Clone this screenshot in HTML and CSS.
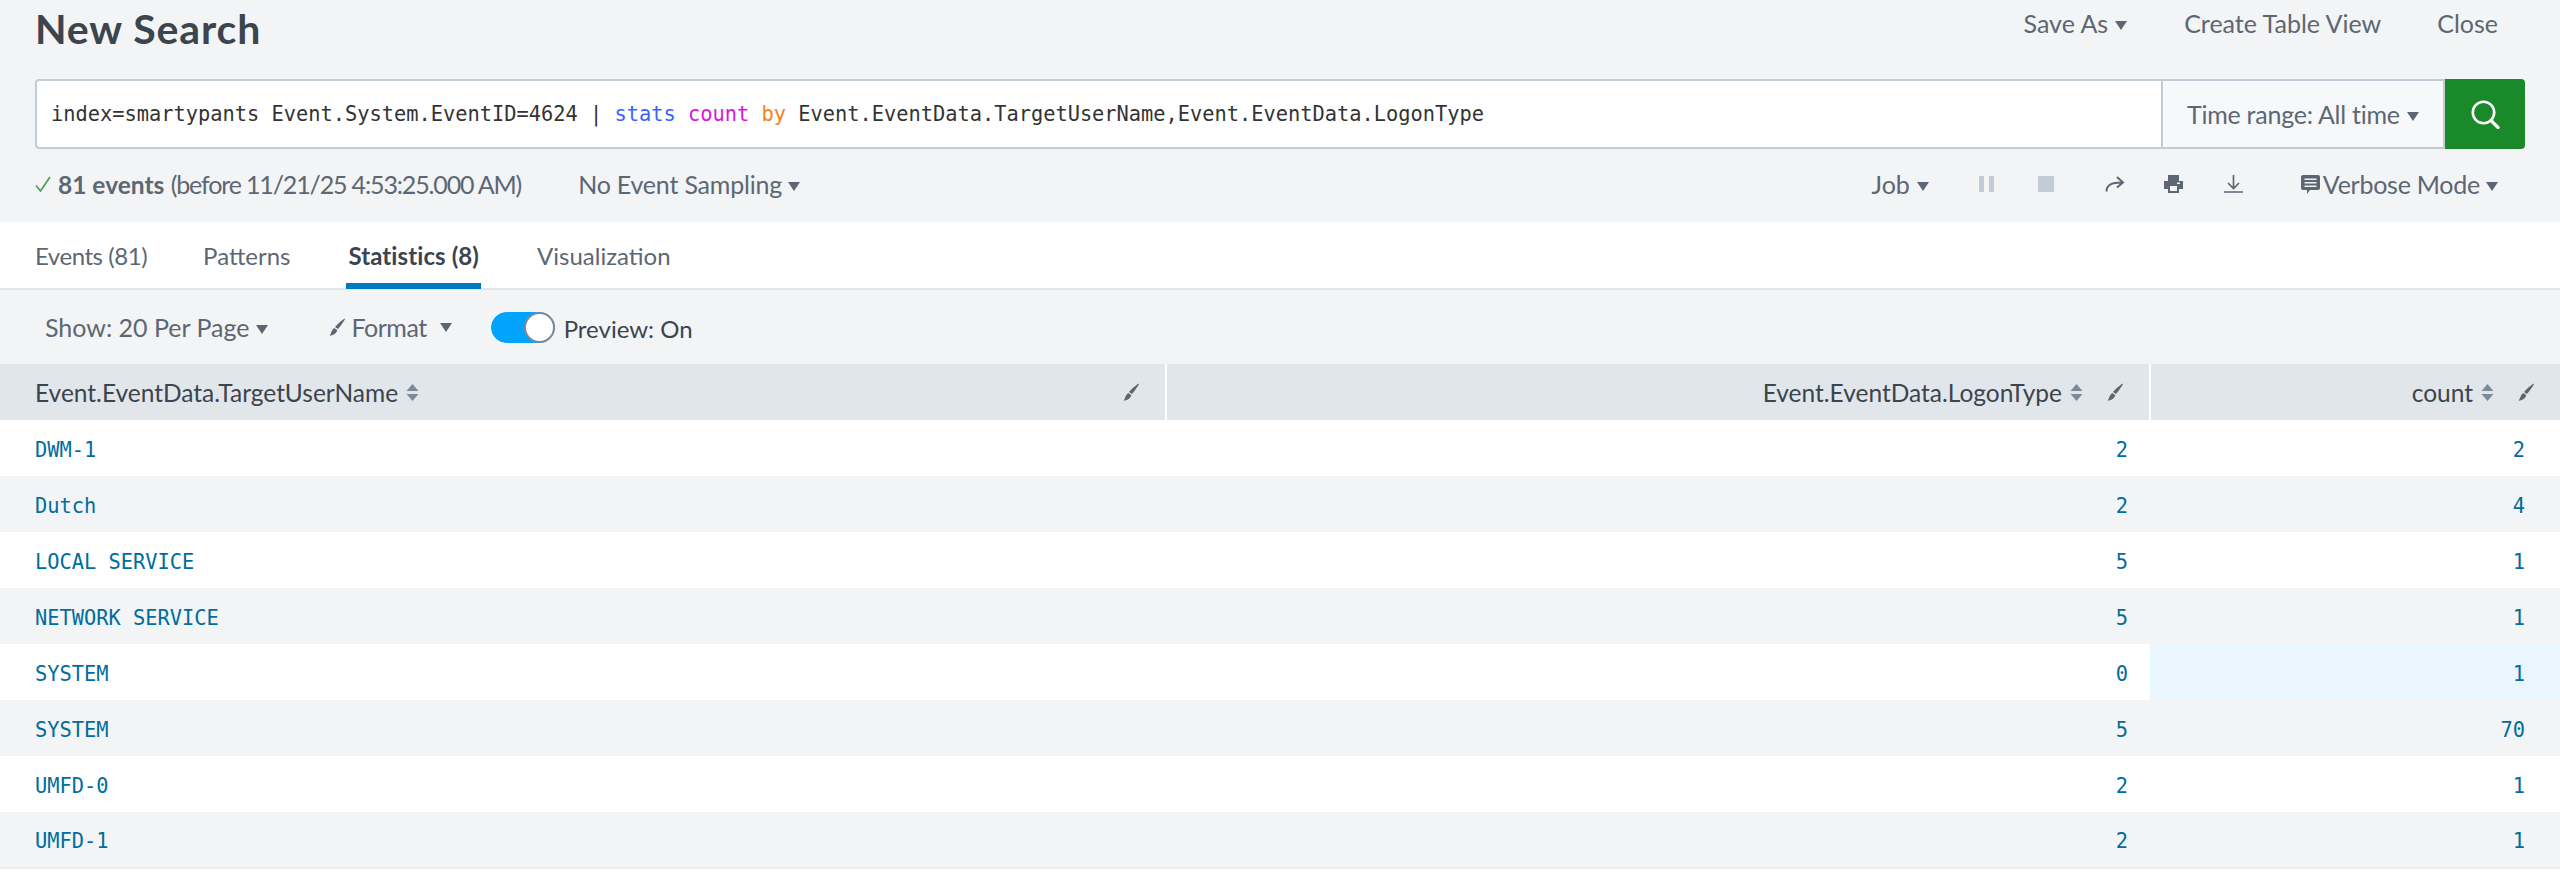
FILE: index.html
```html
<!DOCTYPE html>
<html lang="en">
<head>
<meta charset="utf-8">
<title>New Search</title>
<link rel="stylesheet" href="styles.css">
</head>
<body>
<svg class="defs" width="0" height="0" aria-hidden="true">
  <defs>
    <symbol id="brush" viewBox="0 0 18 18"><path d="M17.500 0.500 L18 1.200 C16 4.500 13.500 8 11 11 L8 9 C10.500 6 14 3 17.500 0.500 Z M7.200 10 L10.200 12 C10 15 7 17.300 2.500 17.800 C4.500 15.500 4 12.500 7.200 10 Z" fill="currentColor"/></symbol>
    <symbol id="sort" viewBox="0 0 13 17"><path d="M6.500 0 L12.500 7 H0.500 Z M0.500 10 H12.500 L6.500 17 Z" fill="currentColor"/></symbol>
  </defs>
</svg>
<header class="head">
  <h1 class="title">New Search</h1>
  <nav class="actions">
    <span class="act act-save">Save As<i class="caret"></i></span>
    <span class="act act-create">Create Table View</span>
    <span class="act">Close</span>
  </nav>
</header>
<section class="searchbar">
  <div class="query"><span>index=smartypants Event.System.EventID=4624 | </span><span class="k-blue">stats</span> <span class="k-pink">count</span> <span class="k-orange">by</span> <span>Event.EventData.TargetUserName,Event.EventData.LogonType</span></div>
  <div class="time">Time range: All time<i class="caret"></i></div>
  <button class="go" aria-label="Search">
    <svg width="29" height="29" viewBox="0 0 29 29"><circle cx="12.500" cy="12.500" r="10.700" fill="none" stroke="#fff" stroke-width="2.600"/><path d="M20 20.500 L27 27.500" stroke="#fff" stroke-width="3.200" stroke-linecap="round"/></svg>
  </button>
</section>
<section class="meta">
  <svg class="check" width="16" height="16" viewBox="0 0 16 16"><path d="M1 9.500 L5.500 15 L15 1" fill="none" stroke="#53a051" stroke-width="1.700"/></svg>
  <span class="count"><b>81 events</b> <span class="when">(before 11/21/25 4:53:25.000 AM)</span></span>
  <span class="sampling">No Event Sampling<i class="caret"></i></span>
  <div class="jobs">
    <span class="job">Job<i class="caret"></i></span>
    <svg class="ic-pause" width="15" height="16" viewBox="0 0 15 16"><path d="M0 0h5v16H0zM10 0h5v16h-5z" fill="#c3cbd4"/></svg>
    <svg class="ic-stop" width="16" height="16" viewBox="0 0 16 16"><path d="M0 0h16v16H0z" fill="#c3cbd4"/></svg>
    <svg class="ic-share" width="20" height="16" viewBox="0 0 20 16"><path d="M1.500 15.500 C1.500 9 6 6.500 17 6.500 M12 1 L18 6.500 L12 11.500" fill="none" stroke="#5c6773" stroke-width="2"/></svg>
    <svg class="ic-print" width="19" height="18" viewBox="0 0 19 18"><path d="M4 0h11v6h4v8h-4v4H4v-4H0V6h4z" fill="#5c6773"/><path d="M6 11h7v5H6z" fill="#f2f4f5"/><path d="M13 7.500h3v1.500h-3z" fill="#f2f4f5"/></svg>
    <svg class="ic-down" width="19" height="18" viewBox="0 0 19 18"><path d="M9.500 0 V13 M4 8 L9.500 13.500 L15 8 M0 17 H19" fill="none" stroke="#5c6773" stroke-width="1.700"/></svg>
    <svg class="ic-note" width="19" height="19" viewBox="0 0 19 19"><path d="M2 0h15a2 2 0 0 1 2 2v11a2 2 0 0 1-2 2H9l-3 4v-4H2a2 2 0 0 1-2-2V2a2 2 0 0 1 2-2z" fill="#5c6773"/><path d="M3.500 3.500h12v1.500h-12zM3.500 7h12v1.500h-12zM3.500 10.500h12v1.500h-12z" fill="#f2f4f5"/></svg>
    <span class="mode">Verbose Mode<i class="caret"></i></span>
  </div>
</section>
<nav class="tabs">
  <span class="tab tab-events">Events (81)</span>
  <span class="tab tab-patterns">Patterns</span>
  <span class="tab tab-on">Statistics (8)</span>
  <span class="tab">Visualization</span>
</nav>
<section class="tools">
  <span class="show">Show: 20 Per Page<i class="caret"></i></span>
  <span class="format"><svg class="fmt-ic" width="18" height="18"><use href="#brush"/></svg><span class="fmt-label">Format</span><i class="caret caret-far"></i></span>
  <span class="toggle"><i class="knob"></i></span>
  <span class="preview">Preview: On</span>
</section>
<table class="results">
  <colgroup><col class="c1"><col class="c2"><col class="c3"></colgroup>
  <thead>
    <tr>
      <th class="left"><div class="th"><span>Event.EventData.TargetUserName</span><svg class="sort" width="13" height="17"><use href="#sort"/></svg><svg class="edit edit-push" width="18" height="18"><use href="#brush"/></svg></div></th>
      <th><div class="th th-r"><span>Event.EventData.LogonType</span><svg class="sort" width="13" height="17"><use href="#sort"/></svg><svg class="edit" width="18" height="18"><use href="#brush"/></svg></div></th>
      <th><div class="th th-r"><span>count</span><svg class="sort" width="13" height="17"><use href="#sort"/></svg><svg class="edit" width="18" height="18"><use href="#brush"/></svg></div></th>
    </tr>
  </thead>
  <tbody>
    <tr><td class="left">DWM-1</td><td>2</td><td>2</td></tr>
    <tr><td class="left">Dutch</td><td>2</td><td>4</td></tr>
    <tr><td class="left">LOCAL SERVICE</td><td>5</td><td>1</td></tr>
    <tr><td class="left">NETWORK SERVICE</td><td>5</td><td>1</td></tr>
    <tr><td class="left">SYSTEM</td><td>0</td><td class="hot">1</td></tr>
    <tr><td class="left">SYSTEM</td><td>5</td><td>70</td></tr>
    <tr><td class="left">UMFD-0</td><td>2</td><td>1</td></tr>
    <tr><td class="left">UMFD-1</td><td>2</td><td>1</td></tr>
  </tbody>
</table>
</body>
</html>
```
FILE: styles.css
```css
* { box-sizing: border-box; }
html, body { margin: 0; padding: 0; background: #fff; }
body { font-family: "Lato", "Open Sans", sans-serif; font-size: 25px; color: #5c6773; width: 2560px; height: 887px; overflow: hidden; }
.defs { position: absolute; }
.caret { display: inline-block; width: 0; height: 0; border-left: 6.500px solid transparent; border-right: 6.500px solid transparent; border-top: 9px solid #5c6773; margin-left: 7px; vertical-align: 3px; }
.caret-far { margin-left: 13px; }

.head { background: #f2f4f5; height: 79px; display: flex; justify-content: space-between; align-items: flex-start; padding: 0 62px 0 35px; }
.title { margin: 4px 0 0; font-size: 41px; line-height: 50px; font-weight: 700; color: #3c444d; letter-spacing: 0.900px; }
.actions { display: flex; margin-top: 8px; line-height: 30px; }
.act-save { margin-right: 57px; }
.act-create { margin-right: 56px; }

.searchbar { background: #f2f4f5; padding: 0 35px; display: flex; height: 70px; }
.query { flex: 1; background: #fff; border: 2px solid #c3cbd4; border-right: 0; border-radius: 4px 0 0 4px; padding-left: 14px; font: 20.350px/66px "DejaVu Sans Mono", monospace; color: #333; white-space: pre; }
.k-blue { color: #3863ff; }
.k-pink { color: #d916d9; }
.k-orange { color: #f58220; }
.time { width: 284px; background: #f7f8fa; border: 2px solid #c3cbd4; padding-left: 24px; line-height: 66px; color: #5c6773; white-space: nowrap; letter-spacing: -0.250px; }
.go { width: 80px; background: #1a8929; border: 0; border-radius: 0 4px 4px 0; padding: 0; display: flex; align-items: center; justify-content: center; }

.meta { background: #f2f4f5; height: 73px; display: flex; align-items: center; padding: 0 62px 3px 35px; }
.check { margin-right: 7px; }
.count { margin-right: 57px; white-space: nowrap; }
.count b { font-weight: 700; font-size: 24.500px; }
.when { letter-spacing: -1.150px; }
.sampling { letter-spacing: -0.200px; white-space: nowrap; }
.sampling .caret { margin-left: 6px; }
.jobs { margin-left: auto; display: flex; align-items: center; }
.ic-pause { margin-left: 50px; }
.ic-stop { margin-left: 44px; }
.ic-share { margin-left: 51px; }
.ic-print { margin-left: 39px; }
.ic-down { margin-left: 41px; }
.ic-note { margin-left: 58px; margin-right: 3px; }
.mode { letter-spacing: -0.250px; }
.mode .caret { margin-left: 6px; }

.tabs { background: #fff; height: 68px; border-bottom: 2px solid #e1e6eb; display: flex; padding-left: 35px; line-height: 67px; font-size: 24px; }
.tab { height: 67px; white-space: nowrap; }
.tab-events { margin-right: 56px; letter-spacing: -0.450px; }
.tab-patterns { margin-right: 58px; }
.tab-on { font-weight: 700; color: #3c444d; border-bottom: 6px solid #007abd; margin-right: 56px; padding: 0 2px; margin-left: -2px; line-height: 67px; letter-spacing: 0.100px; }

.tools { background: #f2f4f5; height: 74px; display: flex; align-items: center; padding-left: 45px; }
.show { margin-right: 59px; white-space: nowrap; }
.show .caret { margin-left: 6px; }
.format { display: flex; align-items: center; white-space: nowrap; margin-right: 39px; }
.format .caret { vertical-align: 0; }
.fmt-label { letter-spacing: -0.500px; }
.fmt-ic { margin-right: 7px; color: #5c6773; }
.toggle { width: 64px; height: 31px; border-radius: 16px; background: #00a4fd; border: 1px solid #00a4fd; position: relative; margin-right: 9px; }
.knob { position: absolute; right: -1px; top: -1px; width: 31px; height: 31px; border-radius: 50%; background: #fff; border: 2px solid #7d8a99; }
.preview { color: #3c444d; margin-top: 2px; font-size: 24px; }

.results { width: 2560px; table-layout: fixed; border-collapse: collapse; border-bottom: 2px solid #e9ecef; }
.c1 { width: 1166px; }
.c2 { width: 984px; }
.c3 { width: 410px; }
th { background: #e1e6eb; height: 56px; padding: 0; font-weight: 400; color: #3c444d; border-left: 2px solid #fff; }
th.left { border-left: 0; }
.th { display: flex; align-items: center; padding: 0 26px 0 35px; font-size: 24.500px; }
.th-r { justify-content: flex-end; }
.sort { margin-left: 8px; color: #7d8a99; }
.edit { margin-left: 22px; color: #5c6773; }
.edit-push { margin-left: auto; }
td { height: 56px; padding: 3px 35px 0 0; text-align: right; font: 20.350px "DejaVu Sans Mono", monospace; color: #006d9c; }
td:nth-child(2) { padding-right: 22px; }
td.left { text-align: left; padding: 3px 0 0 35px; }
tbody tr:nth-child(even) td { background: #f2f4f5; }
td.hot { background: #e9f6fd; }
```
